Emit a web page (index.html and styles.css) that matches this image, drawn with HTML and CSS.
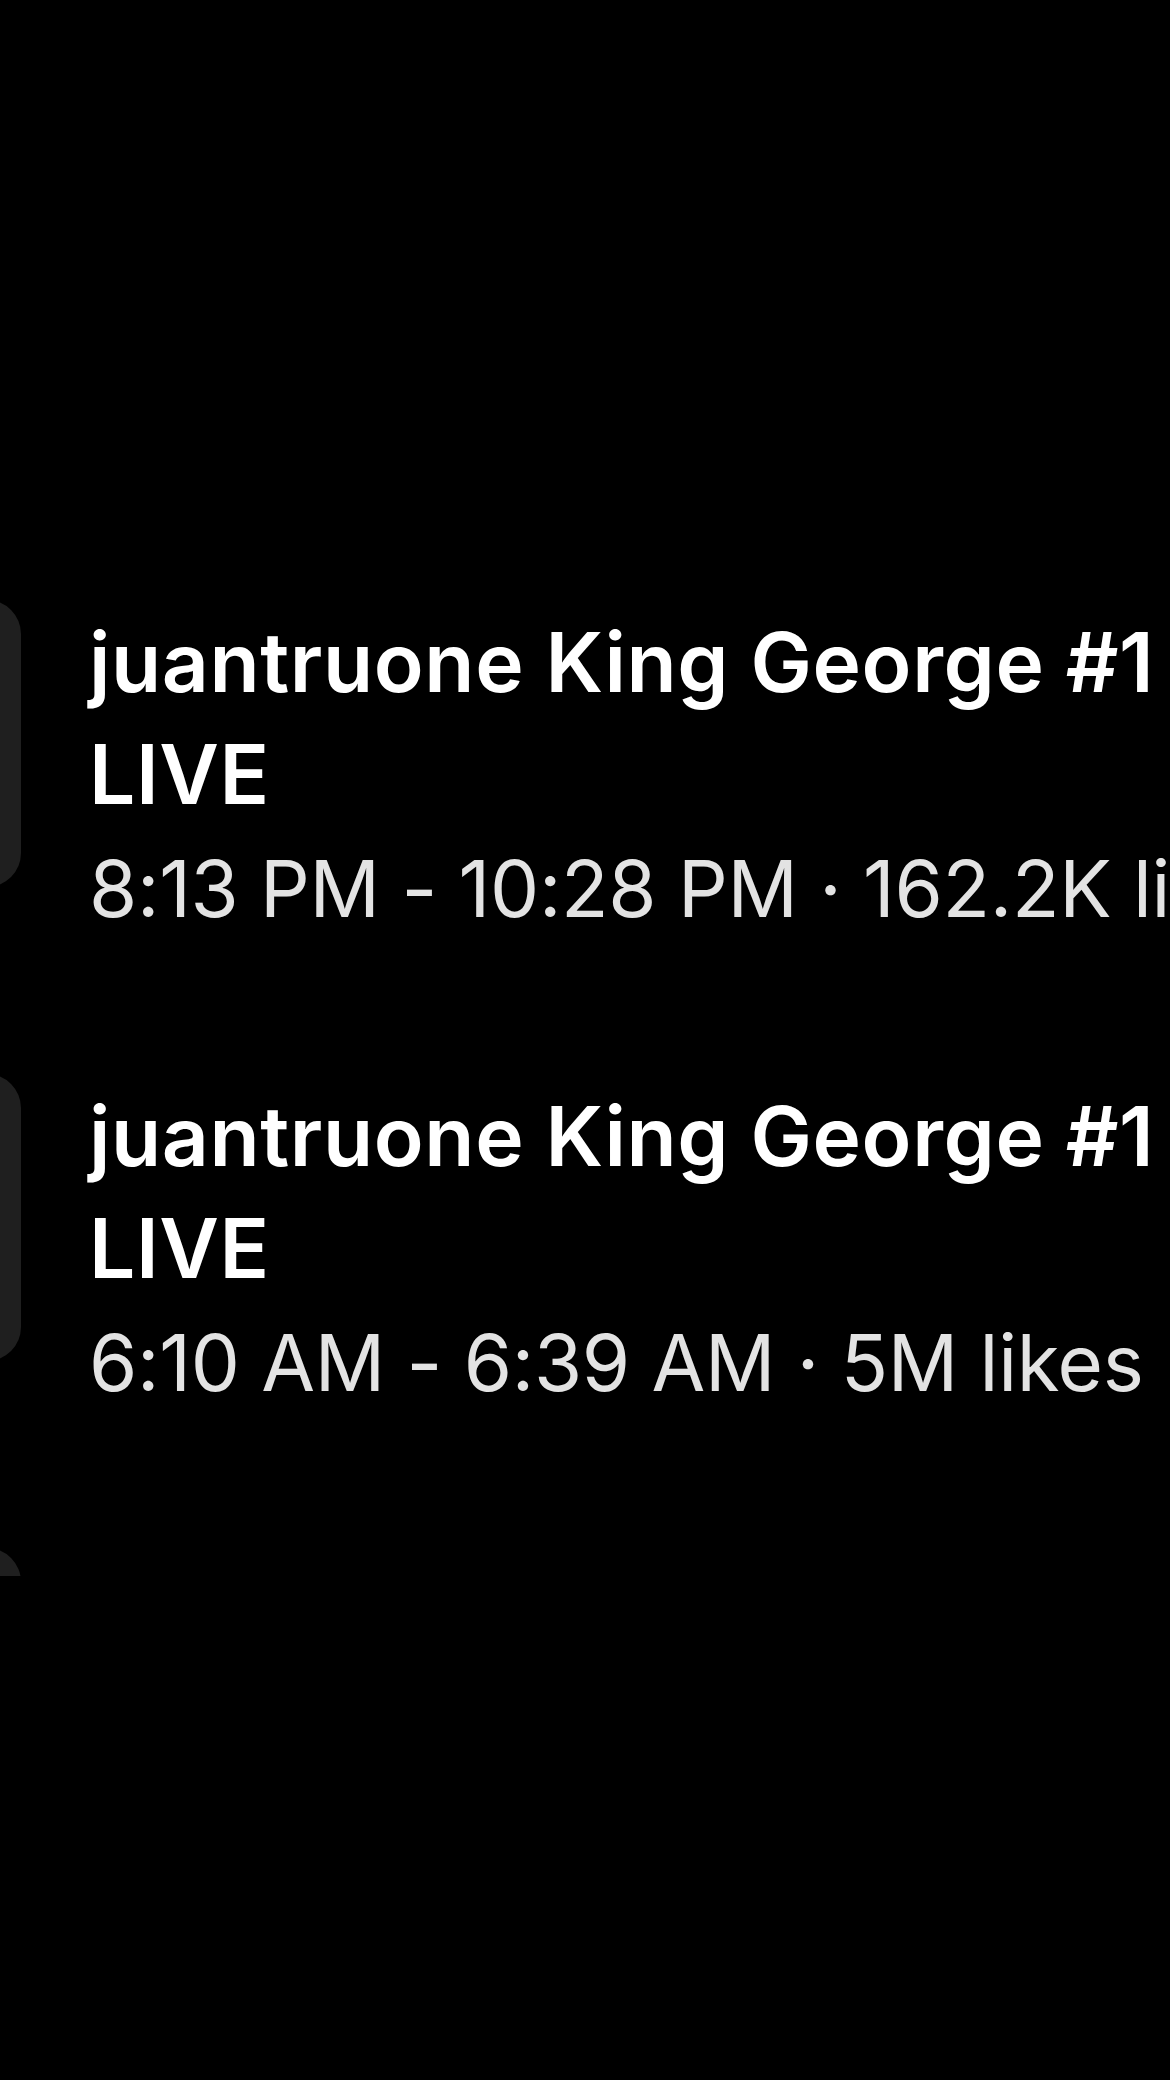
FILE: index.html
```html
<!DOCTYPE html>
<html lang="en">
<head>
    <meta charset="UTF-8">
    <meta name="viewport" content="width=device-width, initial-scale=1.0">
    <title>Past LIVEs</title>
    <link rel="stylesheet" href="styles.css">
</head>

<body>
    <div class="screen">
        <div class="feed">
            <div class="live-row">
                <div class="thumb"></div>
                <div class="info">
                    <p class="title">juantruone King George #1 LIVE</p>
                    <p class="meta">8:13 PM - 10:28 PM · 162.2K likes</p>
                </div>
            </div>

            <div class="live-row">
                <div class="thumb"></div>
                <div class="info">
                    <p class="title">juantruone King George #1 LIVE</p>
                    <p class="meta">6:10 AM - 6:39 AM · 5M likes</p>
                </div>
            </div>

            <div class="live-row">
                <div class="thumb"></div>
                <div class="info">
                    <p class="title">juantruone King George #1 LIVE</p>
                    <p class="meta">5:02 PM - 7:45 PM · 1.1M likes</p>
                </div>
            </div>
        </div>
    </div>
</body>

</html>
```

FILE: styles.css
```css
body {
    margin: 0;
    background-color: #000;
    font-family: Inter, "Noto Sans", sans-serif;
    color: #fff;
}

.screen {
    height: 1576px;
    overflow: hidden;
}

.feed {
    padding-top: 600px;
    display: flex;
    flex-direction: column;
    gap: 127px;
}

.live-row {
    display: flex;
    align-items: flex-start;
    gap: 68px;
}

.thumb {
    flex: none;
    width: 220px;
    height: 287px;
    margin-left: -199px;
    background-color: #1f1f1f;
    border-radius: 34px;
}

.info {
    flex: 1;
    min-width: 0;
    padding-top: 7px;
}

.info p {
    margin: 0;
}

.title {
    font-size: 82px;
    font-weight: 600;
    line-height: 112px;
    letter-spacing: 0.6px;
}

.meta {
    font-size: 78px;
    font-weight: 400;
    line-height: 116px;
    letter-spacing: -0.3px;
    color: #e3e3e3;
    white-space: nowrap;
}
```
